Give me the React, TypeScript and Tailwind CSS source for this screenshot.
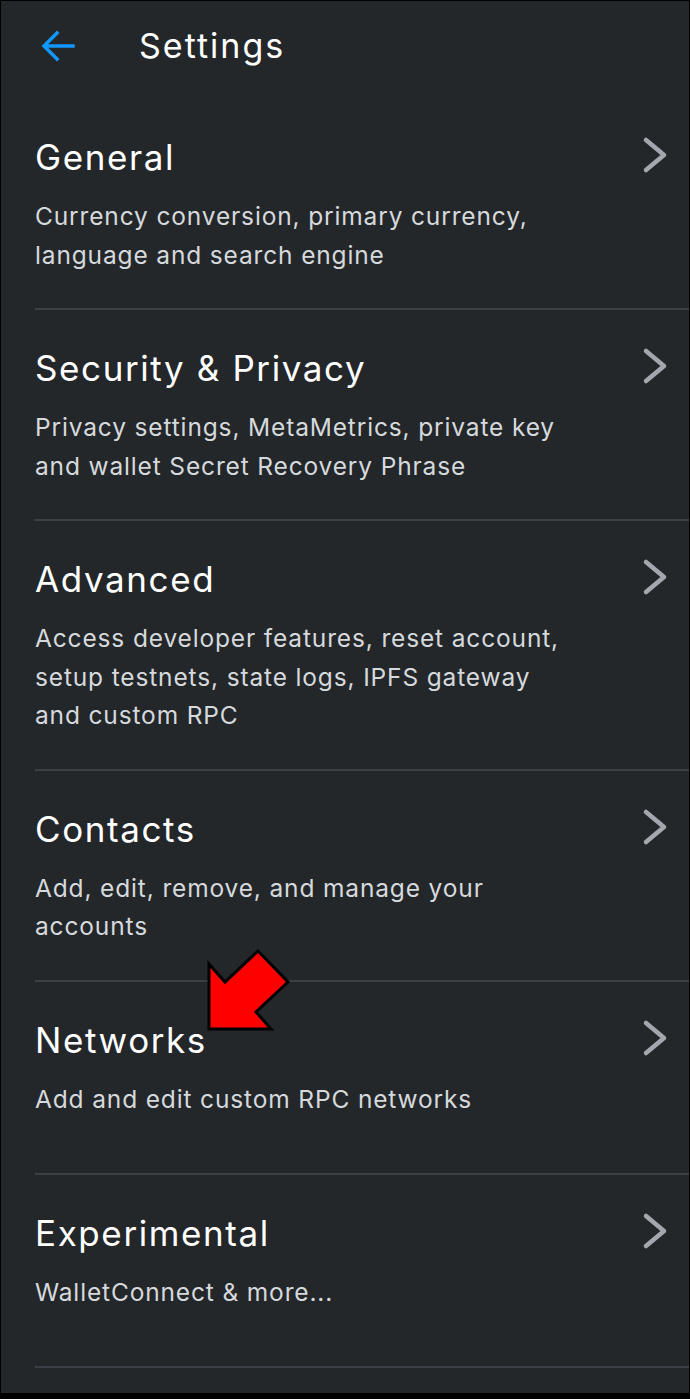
import React from 'react';

interface SettingItem {
  title: string;
  lines: string[];
}

const items: SettingItem[] = [
  { title: 'General', lines: ['Currency conversion, primary currency,', 'language and search engine'] },
  { title: 'Security & Privacy', lines: ['Privacy settings, MetaMetrics, private key', 'and wallet Secret Recovery Phrase'] },
  { title: 'Advanced', lines: ['Access developer features, reset account,', 'setup testnets, state logs, IPFS gateway', 'and custom RPC'] },
  { title: 'Contacts', lines: ['Add, edit, remove, and manage your', 'accounts'] },
  { title: 'Networks', lines: ['Add and edit custom RPC networks'] },
  { title: 'Experimental', lines: ['WalletConnect & more...'] },
];

function Chevron() {
  return (
    <svg width="30" height="42" viewBox="0 0 30 42" className="shrink-0">
      <path d="M6 5 L24 20 L6 35" fill="none" stroke="#a2a8ae" strokeWidth="4.5" strokeLinecap="round" strokeLinejoin="round" />
    </svg>
  );
}

function BackArrow() {
  return (
    <svg width="36" height="34" viewBox="0 0 36 34">
      <path d="M33 17 H5 M17 4 L4 17 L17 30" fill="none" stroke="#1098fc" strokeWidth="3.5" strokeLinecap="square" />
    </svg>
  );
}

function SettingRow({ item }: { item: SettingItem }) {
  return (
    <div className="ml-[34px] border-b-2 border-[#3b4046] min-h-[193px] pt-[36px] pb-[34px]">
      <div className="flex items-start justify-between pr-[19px]">
        <h2 className="text-[35px] leading-[44px] tracking-[1.6px] text-white">{item.title}</h2>
        <Chevron />
      </div>
      <div className="mt-[18px] text-[24.5px] leading-[38.5px] tracking-[0.85px] text-[#d6d9dc]">
        {item.lines.map((line) => (
          <p key={line}>{line}</p>
        ))}
      </div>
    </div>
  );
}

export default function App() {
  return (
    <div className="w-[690px] h-[1399px] bg-black pt-px pl-px pr-px pb-[6px]" style={{ fontFamily: 'Inter, "Noto Sans", sans-serif' }}>
      <div className="relative h-full bg-[#24272a] overflow-hidden">
        <div className="flex items-center h-[98px] pb-[9px]">
          <div className="ml-[39px] mr-[63px] flex items-center">
            <BackArrow />
          </div>
          <h1 className="text-[34px] tracking-[2px] text-white">Settings</h1>
        </div>
        {items.map((item) => (
          <SettingRow key={item.title} item={item} />
        ))}
        <svg className="absolute left-[200px] top-[942px]" width="96" height="94" viewBox="0 0 96 94">
          <polygon points="8,21 24,39 57,8 87,39 55,69 70,86 8,86" fill="#ff0000" stroke="#000" strokeWidth="3" strokeLinejoin="miter" />
        </svg>
      </div>
    </div>
  );
}
